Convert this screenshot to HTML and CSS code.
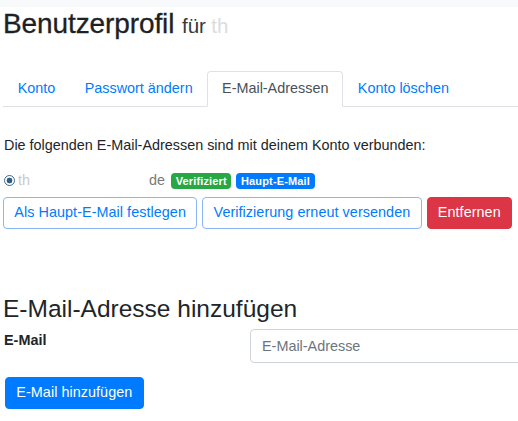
FILE: index.html
```html
<!DOCTYPE html>
<html lang="de">
<head>
<meta charset="utf-8">
<title>Benutzerprofil</title>
<link rel="stylesheet" href="styles.css">
</head>
<body>
<div class="topbar"></div>
<main class="page">
  <h1 class="title">Benutzerprofil <small class="user"><span class="user-a">für</span> <span class="user-b">th</span><span class="hidden-part user-hide"></span></small></h1>

  <ul class="tabs">
    <li><a class="tab" href="#">Konto</a></li>
    <li><a class="tab" href="#">Passwort ändern</a></li>
    <li><a class="tab active" href="#">E-Mail-Adressen</a></li>
    <li><a class="tab" href="#">Konto löschen</a></li>
  </ul>

  <p class="intro">Die folgenden E-Mail-Adressen sind mit deinem Konto verbunden:</p>

  <div class="email-row">
    <span class="radio"></span>
    <span class="addr"><span class="addr-a">th</span><span class="hidden-part addr-hide"></span><span class="addr-b">de</span></span>
    <span class="badge badge-green">Verifiziert</span>
    <span class="badge badge-blue">Haupt-E-Mail</span>
  </div>

  <div class="actions">
    <button class="btn btn-outline">Als Haupt-E-Mail festlegen</button>
    <button class="btn btn-outline">Verifizierung erneut versenden</button>
    <button class="btn btn-danger">Entfernen</button>
  </div>

  <h2 class="subtitle">E-Mail-Adresse hinzufügen</h2>

  <form class="add-form">
    <div class="field">
      <label class="field-label">E-Mail</label>
      <input class="field-input" type="email" placeholder="E-Mail-Adresse">
    </div>
    <button class="btn btn-primary" type="button">E-Mail hinzufügen</button>
  </form>
</main>
</body>
</html>
```

FILE: styles.css
```css
* { box-sizing: border-box; }

html, body {
  margin: 0;
  padding: 0;
  background: #fff;
  overflow: hidden;
}

body {
  font-family: "Liberation Sans", Arial, sans-serif;
  font-size: 14.4px;
  line-height: 1.5;
  color: #212529;
}

.topbar {
  height: 7px;
  background: #f8f9fa;
}

.page {
  padding-left: 3px;
}

.title {
  margin: 0;
  font-size: 28px;
  font-weight: normal;
  line-height: 1.2;
  color: #1d2124;
  letter-spacing: -0.1px;
  -webkit-text-stroke: 0.3px #1d2124;
}

.user {
  font-size: 20.5px;
  -webkit-text-stroke: 0;
}

.user-a { color: #343a40; }
.user-b { color: #dcdcdc; }

.hidden-part {
  display: inline-block;
}

.user-hide {
  width: 60px;
  height: 14px;
}

.tabs {
  list-style: none;
  margin: 30px 0 0 0;
  padding: 0;
  display: flex;
  border-bottom: 1px solid #dee2e6;
}

.tab {
  display: block;
  padding: 6.5px 13.7px;
  margin-bottom: -1px;
  border: 1px solid transparent;
  border-top-left-radius: 4px;
  border-top-right-radius: 4px;
  color: #007bff;
  text-decoration: none;
  line-height: 1.5;
}

.tab.active {
  color: #495057;
  background: #fff;
  border-color: #dee2e6 #dee2e6 #fff;
}

.intro {
  margin: 28px 0 0 1px;
}

.email-row {
  display: flex;
  align-items: center;
  margin-top: 14px;
  height: 20px;
  margin-left: 1px;
}

.radio {
  width: 11px;
  height: 11px;
  border-radius: 50%;
  border: 1px solid #3f6888;
  background: radial-gradient(circle, #2c5d86 0 2.6px, #fff 3.2px);
  margin-right: 3px;
}

.addr {
  display: inline-flex;
  align-items: baseline;
}

.addr-a { color: #c9c9c9; }
.addr-b { color: #7a7a7a; }

.addr-hide {
  width: 119px;
  height: 10px;
}

.badge {
  display: inline-block;
  font-size: 11px;
  font-weight: bold;
  line-height: 1;
  padding: 3px 4.6px 2.5px;
  border-radius: 4px;
  color: #fff;
  margin-left: 5px;
  letter-spacing: 0.15px;
}

.badge-green { background: #28a745; margin-left: 6px; }
.badge-blue { background: #007bff; }

.actions {
  display: flex;
  gap: 5px;
  margin-top: 6px;
}

.btn {
  font-family: inherit;
  font-size: 14.4px;
  line-height: 1.5;
  padding: 4.5px 10.3px;
  border: 1px solid transparent;
  border-radius: 4px;
  letter-spacing: 0.05px;
  cursor: pointer;
}

.btn-outline {
  background: #fff;
  color: #007bff;
  border-color: #8ab6f5;
}

.btn-danger {
  background: #dc3545;
  color: #fff;
  border-color: #dc3545;
}

.btn-primary {
  background: #007bff;
  color: #fff;
  border-color: #007bff;
}

.subtitle {
  margin: 65px 0 0;
  font-size: 24.5px;
  font-weight: normal;
  line-height: 1.2;
  color: #212529;
}

.add-form {
  margin-top: 5px;
}

.field {
  display: grid;
  grid-template-columns: 247px 1fr;
  margin-right: -20px;
}

.field-label {
  font-weight: bold;
  padding-top: 1px;
  padding-left: 1px;
}

.field-input {
  font-family: inherit;
  font-size: 14.4px;
  line-height: 1.5;
  height: 34px;
  padding: 5px 11px;
  border: 1px solid #ced4da;
  border-radius: 4px;
  color: #495057;
}

.field-input::placeholder {
  color: #6c757d;
}

.add-form .btn-primary {
  margin-top: 14px;
  margin-left: 2px;
}
```
